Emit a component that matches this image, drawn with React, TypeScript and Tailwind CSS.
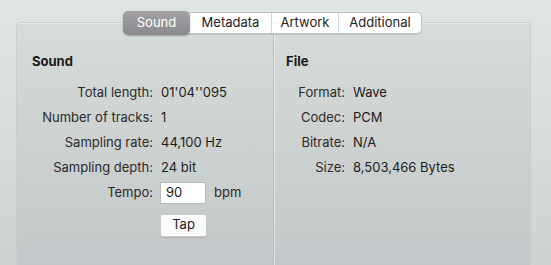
import React from 'react';

const soundRows: [string, string][] = [
    ['Total length:', "01'04''095"],
    ['Number of tracks:', '1'],
    ['Sampling rate:', '44,100 Hz'],
    ['Sampling depth:', '24 bit'],
];

const fileRows: [string, string][] = [
    ['Format:', 'Wave'],
    ['Codec:', 'PCM'],
    ['Bitrate:', 'N/A'],
    ['Size:', '8,503,466 Bytes'],
];

const tabs = ['Sound', 'Metadata', 'Artwork', 'Additional'];

function Tabs() {
    return (
        <div className="absolute -top-[11px] left-[107px] flex items-center">
            <div className="flex h-[22px] items-stretch rounded-[5px] border border-[#c4c6c5] bg-white shadow-[0_1px_1px_rgba(0,0,0,0.12)] text-[13px] text-[#222]">
                {tabs.map((t, i) =>
                    i === 0 ? (
                        <div
                            key={t}
                            className="-my-[2px] -ml-[2px] flex w-[67px] items-center justify-center rounded-[5px] bg-gradient-to-b from-[#a3a3a7] to-[#8a8a8e] text-white shadow-[0_1px_2px_rgba(0,0,0,0.25)]"
                        >
                            {t}
                        </div>
                    ) : (
                        <div
                            key={t}
                            className={`flex items-center justify-center ${i === 1 ? 'w-[81px]' : i === 2 ? 'w-[67px]' : 'w-[83px]'} ${i > 1 ? 'border-l border-[#d8d8d8]' : ''}`}
                        >
                            {t}
                        </div>
                    )
                )}
            </div>
        </div>
    );
}

function Row({ label, value, labelW }: { label: string; value: React.ReactNode; labelW: string }) {
    return (
        <div className="flex h-[25px] items-center">
            <span className={`${labelW} shrink-0 text-right text-[#2a2a2a]`}>{label}</span>
            <span className="ml-[8px] text-[#1c1c1c]">{value}</span>
        </div>
    );
}

export default function App() {
    return (
        <div
            className="h-[265px] w-[551px] overflow-hidden bg-gradient-to-b from-[#dfe6e2] to-[#cdd3d2] pl-[16px] pr-[20px] pt-[22px] text-[13px]"
            style={{ fontFamily: 'Inter, "Noto Sans", sans-serif' }}
        >
            <div className="relative flex h-[260px] rounded-t-[5px] border border-b-0 border-[#c9cecc] bg-gradient-to-b from-[#d6dcd9] to-[#c2c6c8] shadow-[inset_0_1px_0_rgba(255,255,255,0.4)]">
                <Tabs />
                {/* Sound */}
                <div className="w-[256px] shrink-0 pl-[15px] pt-[29px]">
                    <h2 className="mb-[9px] font-bold text-[#1a1a1a]">Sound</h2>
                    {soundRows.map(([l, v]) => (
                        <Row key={l} label={l} value={v} labelW="w-[121px]" />
                    ))}
                    <div className="flex h-[25px] items-center">
                        <span className="w-[121px] shrink-0 text-right text-[#2a2a2a]">Tempo:</span>
                        <div className="ml-[7px] flex h-[22px] w-[46px] items-center border border-[#b9bbbb] bg-white pl-[5px] text-[#1c1c1c]">
                            90
                        </div>
                        <span className="ml-[8px] text-[#2a2a2a]">bpm</span>
                    </div>
                    <div className="ml-[128px] mt-[8px] flex h-[23px] w-[47px] items-center justify-center rounded-[3px] border border-[#c9cbcb] bg-[#fbfbfb] text-[#1c1c1c] shadow-[0_1px_1px_rgba(0,0,0,0.1)]">
                        Tap
                    </div>
                </div>
                {/* divider */}
                <div className="w-px bg-[#b9bdbe] shadow-[1px_0_0_rgba(255,255,255,0.45)]" />
                {/* File */}
                <div className="flex-1 pl-[12px] pt-[29px]">
                    <h2 className="mb-[9px] font-bold text-[#1a1a1a]">File</h2>
                    {fileRows.map(([l, v]) => (
                        <Row key={l} label={l} value={v} labelW="w-[59px]" />
                    ))}
                </div>
            </div>
        </div>
    );
}
